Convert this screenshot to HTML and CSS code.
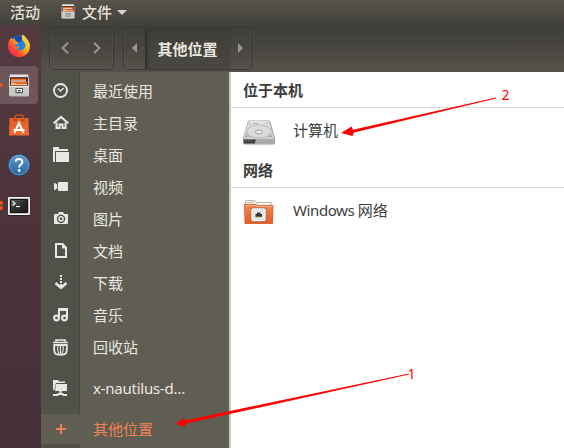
FILE: index.html
```
<!DOCTYPE html>
<html lang="zh-CN">
<head>
<meta charset="utf-8">
<title>文件</title>
<link rel="stylesheet" href="styles.css">
</head>
<body>
<svg width="0" height="0" class="defs">
  <defs>
    <linearGradient id="metal" x1="0" y1="0" x2="0" y2="1"><stop offset="0" stop-color="#e6e6e4"/><stop offset="1" stop-color="#b5b5b1"/></linearGradient>
    <linearGradient id="orange" x1="0" y1="0" x2="0" y2="1"><stop offset="0" stop-color="#f08a55"/><stop offset="1" stop-color="#e95a20"/></linearGradient>
    <linearGradient id="bag" x1="0" y1="0" x2="0" y2="1"><stop offset="0" stop-color="#e0602a"/><stop offset="1" stop-color="#f4672b"/></linearGradient>
    <linearGradient id="blue" x1="0" y1="0" x2="0" y2="1"><stop offset="0" stop-color="#5c9bd0"/><stop offset="1" stop-color="#28649d"/></linearGradient>
    <linearGradient id="screen" x1="0" y1="0" x2="1" y2="1"><stop offset="0" stop-color="#666"/><stop offset=".5" stop-color="#2c2c2c"/><stop offset="1" stop-color="#1a1a1a"/></linearGradient>
    <linearGradient id="fire" x1="1" y1="0" x2="0" y2="1"><stop offset="0" stop-color="#fff04a"/><stop offset=".42" stop-color="#ffb01d"/><stop offset=".65" stop-color="#ff5030"/><stop offset="1" stop-color="#e8135e"/></linearGradient>
    <symbol id="cabinet" viewBox="0 0 22 22" preserveAspectRatio="none">
      <path d="M2 .5h18l1 5V20q0 1.500-1.500 1.500h-17Q1 21.500 1 20V5.500z" fill="url(#metal)"/>
      <path d="M2 3h18v9H2z" fill="#493129"/>
      <path d="M3 4.500h15v1.700H3z" fill="#f46a22"/><path d="M3 6.200h15v1.200H3z" fill="#fff0dc"/><path d="M3 7.400h16V11H3z" fill="#ec6420"/><path d="M3 8.500h5l1 1h10v1H3z" fill="#f9c49e"/>
      <path d="M1 11.500h20v9H1z" fill="#c9c9c6"/><path d="M1 11.800h20" stroke="#f4f4f2" stroke-width=".8"/>
      <path d="M8 13.800h6.500v4H8z" fill="#fff" stroke="#555" stroke-width="1"/><path d="M9.700 16h3" stroke="#333" stroke-width="1.200"/>
    </symbol>
  </defs>
</svg>
<div class="desktop">
  <header class="topbar">
    <span class="activities">活动</span>
    <svg class="app-icon" width="14" height="15"><use href="#cabinet"/></svg>
    <span>文件</span>
    <svg class="caret" width="10" height="5"><path d="M0 0h10L5 5z" fill="#d8d6d0"/></svg>
  </header>
  <div class="workspace">
    <nav class="dock">
      <div class="launcher">
        <svg width="24" height="24" viewBox="0 0 24 24"><circle cx="12" cy="12" r="9.500" fill="#1685ec"/><path d="M6 6Q10 1 16 4L14 8l-3 2z" fill="#1846a6"/><path d="M15 1.500q3 1 4.500 4 3.500 3 3.500 8A11 11 0 0 1 1 13Q1 7 4.500 4.500L5.300 6.500 8 5.500 8.500 8 11.500 9.500 10 11.500H7.500Q8 14 10.500 13.500L13 13.500Q12 16 9 16q5 3 8.500-1 2-3-.5-6Q14 6 15 1.500z" fill="url(#fire)"/></svg>
      </div>
      <div class="launcher active"><i class="dot"></i><svg width="22" height="23"><use href="#cabinet"/></svg></div>
      <div class="launcher">
        <svg width="22" height="24" viewBox="0 0 22 24"><path d="M7 7V4Q7 2 9 2h4q2 0 2 2v3" fill="none" stroke="#d04d16" stroke-width="1.600"/><path d="M1.500 5h19L21 22.500H1z" fill="url(#bag)"/><path d="M5 7h4M13 7h4" stroke="#b9400e" stroke-width="1.300"/><path d="M6.500 20 11 10l4.500 10M5.500 17h11" fill="none" stroke="#fff" stroke-width="2"/></svg>
      </div>
      <div class="launcher">
        <svg width="24" height="24" viewBox="0 0 24 24"><circle cx="12" cy="12" r="10.600" fill="url(#blue)" stroke="#244c70" stroke-width="1"/><circle cx="12" cy="12" r="9.800" fill="none" stroke="#7fb2de" stroke-width=".7"/><path d="M8.700 8.800Q8.800 6 12 6q3.300 0 3.300 3 0 1.500-1.700 2.700-1.400 1-1.400 2.800" fill="none" stroke="#fff" stroke-width="2"/><circle cx="12.200" cy="17.500" r="1.400" fill="#fff"/></svg>
      </div>
      <div class="launcher terminal"><i class="dot upper"></i><i class="dot lower"></i>
        <svg width="22" height="19" viewBox="0 0 22 19"><path d="M.5.5h21v17H.5z" fill="#c4c4c1" stroke="#efefec"/><path d="M2.500 2.500h17v13h-17z" fill="url(#screen)" stroke="#111"/><path d="M4.500 4.500 7 6.500 4.500 8.500" fill="none" stroke="#fff" stroke-width="1.200"/><path d="M8 9.500h4" stroke="#fff" stroke-width="1.200"/><path d="M0 18.500h22" stroke="#302127"/></svg>
      </div>
    </nav>
    <main class="window">
      <div class="headerbar">
        <div class="nav-buttons">
          <svg width="8" height="12"><path d="M7 .8 1.700 6 7 11.200" fill="none" stroke="#98968f" stroke-width="2"/></svg>
          <svg width="8" height="12"><path d="M1 .8 6.300 6 1 11.200" fill="none" stroke="#98968f" stroke-width="2"/></svg>
        </div>
        <div class="pathbar">
          <span class="path-arrow"><svg width="5" height="10"><path d="M5 0v10L0 5z" fill="#98968f"/></svg></span>
          <span class="path-current">其他位置</span>
          <span class="path-arrow"><svg width="5" height="10"><path d="M0 0v10l5-5z" fill="#98968f"/></svg></span>
        </div>
      </div>
      <div class="panes">
        <aside class="sidebar">
          <div class="place"><span class="glyph"><svg width="16" height="16"><circle cx="7.500" cy="7.500" r="6.500" fill="none" stroke="currentColor" stroke-width="1.900"/><path d="M4.800 5.500 7.500 8 10.700 5" fill="none" stroke="currentColor" stroke-width="1.300"/></svg></span><span class="label">最近使用</span></div>
          <div class="place"><span class="glyph"><svg width="16" height="16"><path d="M.7 8.300 8 1.900l7.300 6.400" fill="none" stroke="currentColor" stroke-width="2"/><path d="M3.500 7.500v5.500h3V9.500h3v3.500h3V7.500" fill="none" stroke="currentColor" stroke-width="2"/></svg></span><span class="label">主目录</span></div>
          <div class="place"><span class="glyph"><svg width="16" height="16"><path d="M0 15V0h6v2h9v2H2v11z" fill="currentColor"/><path d="M3 5h13v10H3z" fill="currentColor"/></svg></span><span class="label">桌面</span></div>
          <div class="place"><span class="glyph"><svg width="16" height="16"><path d="M6 3h8q1 0 1 1v7q0 1-1 1H6q-1 0-1-1V9L1 11.500v-8L5 6V4q0-1 1-1z" fill="currentColor"/><path d="M4.500 5.500v4" stroke="#51514a" stroke-width=".8"/></svg></span><span class="label">视频</span></div>
          <div class="place"><span class="glyph"><svg width="16" height="16"><path fill-rule="evenodd" d="M2 3h3l1-2h4l1 2h3q1 0 1 1v8q0 1-1 1H2q-1 0-1-1V4q0-1 1-1zM8 3.600a4.200 4.200 0 1 0 .01 0z" fill="currentColor"/><circle cx="8" cy="7.800" r="2.100" fill="none" stroke="currentColor" stroke-width="1.500"/></svg></span><span class="label">图片</span></div>
          <div class="place"><span class="glyph"><svg width="16" height="16"><path d="M3 1h6.500L13 4.700V14H3z" fill="none" stroke="currentColor" stroke-width="2"/><path d="M9 1v4.500h4.500z" fill="currentColor"/></svg></span><span class="label">文档</span></div>
          <div class="place"><span class="glyph"><svg width="16" height="16"><path d="M7 0h2v2H7zM7 3h2v2H7zM7 6h2v2H7zM7 9h2v3H7z" fill="currentColor"/><path d="M2.500 8 8 12.800l5.500-4.800" fill="none" stroke="currentColor" stroke-width="2.500"/></svg></span><span class="label">下载</span></div>
          <div class="place"><span class="glyph"><svg width="16" height="16"><path d="M6 11V2h8v9M6 3h8" fill="none" stroke="currentColor" stroke-width="2"/><circle cx="3.500" cy="11" r="2.400" fill="none" stroke="currentColor" stroke-width="2.100"/><circle cx="11.500" cy="11" r="2.400" fill="none" stroke="currentColor" stroke-width="2.100"/></svg></span><span class="label">音乐</span></div>
          <div class="place"><span class="glyph"><svg width="16" height="17"><path d="M3 2.500V1h9v1.500M0 3.500h15" fill="none" stroke="currentColor" stroke-width="1.700"/><path d="M1.200 6h12.600v4.500q0 5-3.800 5H5q-3.800 0-3.800-5z" fill="none" stroke="currentColor" stroke-width="1.800"/><path d="M5 6.500q-1 4.500 1 8M7.500 6.500v8M10 6.500q1 4.500-1 8" fill="none" stroke="currentColor" stroke-width="1.100"/></svg></span><span class="label">回收站</span></div>
          <div class="place mount"><span class="glyph"><svg width="16" height="16"><path d="M0 10V0h5l1 1.500h6V3H3L1.300 10z" fill="currentColor"/><path d="M3 4h11v7H2z" fill="currentColor"/><path d="M7.500 11v3M0 15h4.500l1-1h4l1 1H14" fill="none" stroke="currentColor" stroke-width="2"/></svg></span><span class="label latin">x-nautilus-d…</span></div>
          <div class="place selected"><span class="glyph"><svg width="16" height="16"><path d="M8 3v10M3 8h10" stroke="currentColor" stroke-width="2"/></svg></span><span class="label">其他位置</span></div>
        </aside>
        <section class="content">
          <h2>位于本机</h2>
          <div class="location">
            <svg width="34" height="26" viewBox="0 0 34 26"><path d="M6.500 2h21l5 17v5q0 1-1 1h-29q-1 0-1-1v-5z" fill="#c6c7c4" stroke="#858783" stroke-width=".8"/><path d="M7 2.500h19.500L31.500 19H2z" fill="url(#metal)" stroke="#f1f1ef" stroke-width=".6"/><ellipse cx="17" cy="12.500" rx="12" ry="6.500" fill="#dcdcda" stroke="#bdbebb"/><ellipse cx="17" cy="13" rx="3.800" ry="1.900" fill="#e9e9e7" stroke="#a4a5a2"/><path d="M7 5h2M11 4.500h5M24 4h2M3 17.500h2M28 17.500h2" stroke="#999" stroke-width=".8"/><path d="M1.800 20h30.400v4.500H1.800z" fill="#aaaba8"/><path d="M1.800 20.500h12l-1 4h-11z" fill="#3f3f3f"/><path d="M3 22h9" stroke="#888" stroke-dasharray="1 2"/></svg>
            <span>计算机</span>
          </div>
          <h2>网络</h2>
          <div class="location">
            <svg width="34" height="26" viewBox="0 0 34 26"><path d="M3.500 7V2.500Q3.500 1.500 4.500 1.500h8l2 2h14.500V7" fill="#f6f6f4" stroke="#b6b3af"/><path d="M5 3.500h7" stroke="#ef8a5e" stroke-width=".7"/><path d="M2.500 5.500h12l2 1H31l-.5 18H3z" fill="url(#orange)" stroke="#c75a2c" stroke-width=".8"/><path d="M3.500 6.500h10.500l2 1h14" fill="none" stroke="#f6bb99" stroke-width=".7"/><rect x="9.500" y="9.500" width="14" height="12.500" rx="1.500" fill="#e8e8e6" stroke="#fff"/><rect x="9" y="9" width="15" height="13.500" rx="2" fill="none" stroke="#6c5247" stroke-width=".5"/><path d="M13.500 18v-3H15v-1.500h3.500V15H20v3z" fill="#353535"/><path d="M14 18h5.500" stroke="#c8a532" stroke-width=".8"/></svg>
            <span><span class="latin">Windows</span> 网络</span>
          </div>
        </section>
      </div>
    </main>
  </div>
  <svg class="annotations" width="564" height="448">
    <g fill="#f00"><path d="M341 133 351.500 126.500 353 129.800 496 97.500 496 98.500 354 132.500 352.500 136z"/><path d="M175.500 424 184 418 186 420.300 409 373.500 409 374.500 186.500 423.500 184.500 426.500z"/></g>
    <text x="501.500" y="100">2</text><text x="407.500" y="379">1</text>
  </svg>
</div>
</body>
</html>
```
FILE: styles.css
```
* { box-sizing: border-box; }
body { margin: 0; font: 15px/20px "Noto Sans CJK SC", sans-serif; color: #3c3c3c; }
svg { display: block; flex: none; }
.defs { position: absolute; }
.desktop { position: relative; display: flex; flex-direction: column; width: 564px; height: 448px; overflow: hidden; }
.topbar { display: flex; align-items: center; height: 25px; flex: none; padding: 0 0 1px 10px; color: #e2e0d9; font-weight: 500; background: linear-gradient(#56534a, #42413b); }
.activities { width: 51px; }
.app-icon { margin: 0 7px 2px 0; }
.caret { margin: 0 0 0 5px; }
.workspace { display: flex; flex: 1; min-height: 0; }
.dock { width: 41px; flex: none; background: linear-gradient(#523a40, #4b3339 50%, #46303a); }
.launcher { position: relative; width: 38px; height: 38px; margin-bottom: 2px; display: flex; align-items: center; justify-content: center; }
.launcher:first-child { height: 39px; }
.launcher.active { background: #6d575c; border-radius: 0 4px 4px 0; }
.launcher.terminal { padding-top: 2px; }
.dot { position: absolute; left: 0; top: 17px; width: 3px; height: 4px; border-radius: 0 2px 2px 0; background: #e95420; }
.dot.upper { top: 15px; }
.dot.lower { top: 20px; }
.window { flex: 1; display: flex; flex-direction: column; min-width: 0; }
.headerbar { height: 47px; flex: none; display: flex; gap: 9px; padding: 3px 8px; background: linear-gradient(#3d3c38, #55514a); }
.nav-buttons, .pathbar { display: flex; align-items: center; height: 42px; border: 1px solid #3b3935; border-radius: 5px; box-shadow: inset 0 0 0 1px #ffffff0b; }
.nav-buttons { width: 65px; justify-content: space-between; padding: 0 12px 2px 11px; }
.pathbar { width: 129px; }
.path-arrow { flex: 1; display: flex; justify-content: center; padding-bottom: 2px; }
.path-current { width: 85px; align-self: stretch; padding-top: 10px; text-align: center; color: #e8e5de; font-weight: 700; border-left: 1px solid #302f2c; background: linear-gradient(#3f3e39, #4a4842); box-shadow: inset 2px 1px 2px #302f2c99; padding-right: 1px; }
.panes { display: flex; flex: 1; min-height: 0; }
.sidebar { width: 190px; flex: none; padding-top: 3px; color: #e8e7e2; border-right: 2px solid #c8c5c1; background: linear-gradient(90deg, #51514a 0 38px, #48483f 38px 39px, #605e52 39px); }
.place { display: flex; align-items: center; height: 32px; }
.glyph { width: 39px; display: flex; padding-left: 12px; }
.label { margin-left: 13px; }
.place.mount { margin-top: 9px; }
.latin { font-family: "Noto Sans", sans-serif; letter-spacing: -0.4px; }
.label.latin { letter-spacing: -0.25px; }
.place.selected { margin-top: 10px; height: 30px; color: #f08156; background: #605e52; }
.content { flex: 1; background: #fff; }
.content h2 { margin: 0; height: 36px; padding: 8px 0 0 12px; font-size: 15px; line-height: 20px; font-weight: 700; border-bottom: 1px solid #dcdcdc; }
.location { display: flex; align-items: center; height: 44px; padding: 4px 0 0 11px; gap: 17px; }
.location > span { margin-top: -5px; }
.annotations { position: absolute; left: 0; top: 0; }
.annotations text { font: 14px "Noto Sans", sans-serif; fill: #f00; }
```
